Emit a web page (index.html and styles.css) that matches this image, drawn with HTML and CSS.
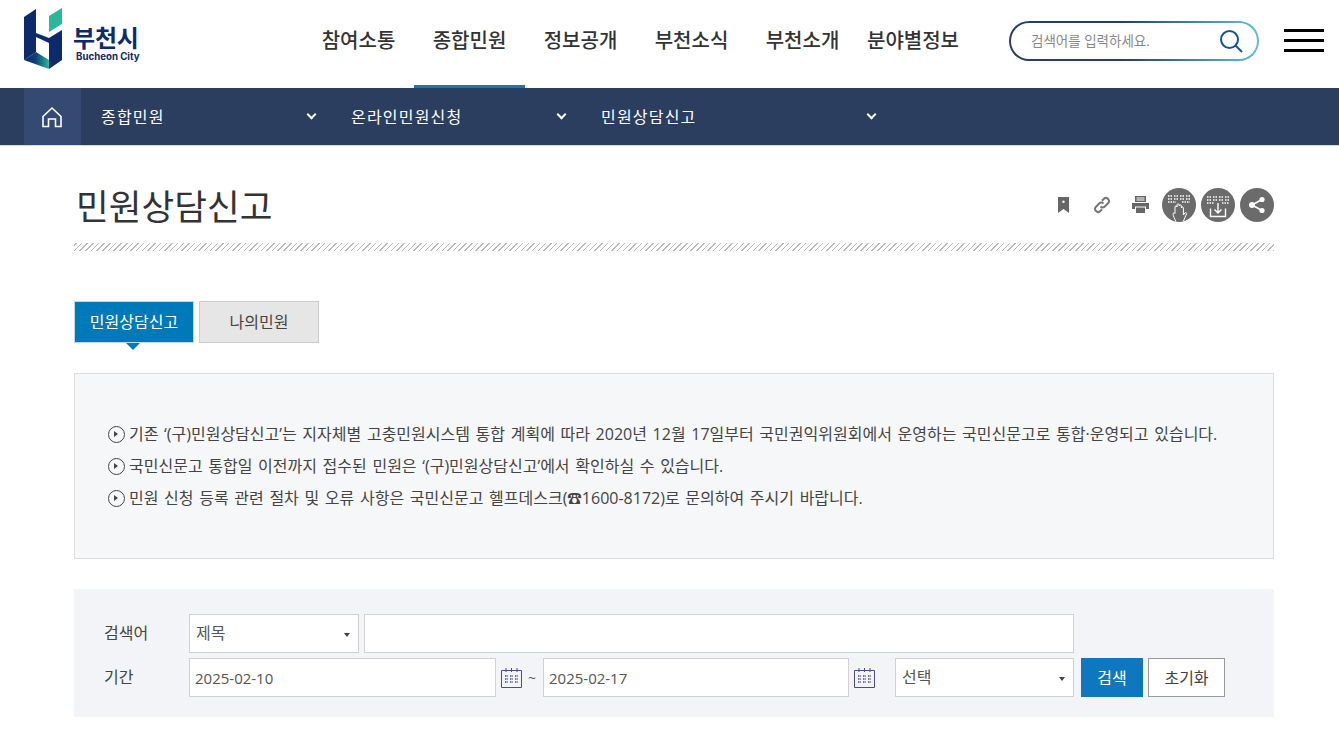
FILE: index.html
```html
<!DOCTYPE html>
<html lang="ko">

<head>
    <meta charset="UTF-8">
    <meta name="viewport" content="width=device-width, initial-scale=1.0">
    <title>민원상담신고 | 부천시</title>
    <link rel="stylesheet" href="styles.css">
</head>

<body>
    <header class="header">
        <a class="logo" href="#">
            <svg class="logo-mark" viewBox="24 8 39 61" width="39" height="61">
                <defs>
                    <linearGradient id="logoFade" x1="0" y1="0" x2="1" y2="0">
                        <stop offset="0" stop-color="#0d2a6b"></stop>
                        <stop offset="0.45" stop-color="#0d3f73"></stop>
                        <stop offset="1" stop-color="#2bb59b"></stop>
                    </linearGradient>
                </defs>
                <polygon points="49,16 62,8 62,24 49,32" fill="#2bb79c"></polygon>
                <polygon points="24,17 36,9 36,52 24,60" fill="#0d2a6b"></polygon>
                <polygon points="36,37 49,43 49,61 62,60 62,30 49,38 36,33" fill="#0d2a6b"></polygon>
                <polygon points="24,60 36,52 49,60 49,69" fill="url(#logoFade)"></polygon>
                <polygon points="49,60 62,52 62,60 49,69" fill="#0d2a6b"></polygon>
                <polygon points="37,39 49,44 49,59 37,51" fill="#fff"></polygon>
            </svg>
            <span class="logo-text">
                <strong>부천시</strong>
                <em>Bucheon City</em>
            </span>
        </a>

        <nav class="gnb">
            <a href="#">참여소통</a>
            <a href="#" class="on">종합민원</a>
            <a href="#">정보공개</a>
            <a href="#">부천소식</a>
            <a href="#">부천소개</a>
            <a href="#" class="last">분야별정보</a>
        </nav>

        <form class="top-search">
            <input type="text" placeholder="검색어를 입력하세요.">
            <svg viewBox="0 0 24 24" width="24" height="24" fill="none" stroke="#12568f" stroke-width="2">
                <circle cx="10.5" cy="10.5" r="8.5"></circle>
                <line x1="16.5" y1="16.5" x2="23" y2="23"></line>
            </svg>
        </form>

        <button class="menu-btn" type="button"><span></span><span></span><span></span></button>
    </header>

    <div class="sub-nav">
        <a class="home" href="#">
            <svg viewBox="0 0 22 22" width="22" height="22" fill="none" stroke="#fff" stroke-width="1.6">
                <path d="M2 10.5 11 2l9 8.5V20.500h-5.500v-7.500h-7v7.500H2z"></path>
            </svg>
        </a>
        <a class="crumb" href="#">종합민원<i></i></a>
        <a class="crumb" href="#">온라인민원신청<i></i></a>
        <a class="crumb wide" href="#">민원상담신고<i></i></a>
    </div>

    <main class="container">
        <div class="title-row">
            <h1>민원상담신고</h1>
            <div class="tools">
                <svg class="tool mark" viewBox="0 0 11 16" width="11" height="16" fill="#666">
                    <path fill-rule="evenodd" d="M0 0h11v16l-5.500-4L0 16zM5.500 3.500a1.200 1.200 0 1 0 0 2.400 1.200 1.200 0 0 0 0-2.400z"></path>
                </svg>
                <svg class="tool link" viewBox="0 0 18 18" width="18" height="18" fill="none" stroke="#777" stroke-width="2">
                    <path d="M7.500 10.500a3 3 0 0 0 4.300 0l3.200-3.200a3 3 0 0 0-4.300-4.300L9 4.700"></path>
                    <path d="M10.500 7.500a3 3 0 0 0-4.300 0L3 10.700A3 3 0 0 0 7.300 15L9 13.300"></path>
                </svg>
                <svg class="tool print" viewBox="0 0 17 17" width="17" height="17" fill="#666">
                    <path fill-rule="evenodd" d="M3 0h11v6H3zM4.500 1.500v1h8v-1zM4.500 3.500v1h8v-1z"></path>
                    <path d="M0 7h17v6h-3v-2.500H3V13H0z"></path>
                    <path d="M4 11.500h9V17H4z"></path>
                </svg>
                <span class="round">
                    <svg viewBox="0 0 34 34" width="34" height="34" fill="none">
                        <g stroke="#fff" stroke-width="1.500">
                            <path d="M6 8h23M6 11h23" stroke-dasharray="1.500 1 1.500 2"></path>
                            <path d="M6 14h8M20 14h8" stroke-dasharray="1.500 1"></path>
                        </g>
                        <path d="M14 34c-1-3-3-6-3-8 0-1 1-1.500 2-.5V19c0-1.500 2-1.500 2 0v-2c0-1.500 2.200-1.500 2.200 0v1c0-1.500 2.200-1.500 2.200 0v2c0-1.500 2-1.500 2 0v7l1.500-2c1-1 2.100 0 1.600 1l-3.500 8" stroke="#fff" stroke-width="1"></path>
                    </svg>
                </span>
                <span class="round">
                    <svg viewBox="0 0 34 34" width="34" height="34" fill="none" stroke="#fff">
                        <g stroke-width="1.500">
                            <path d="M6 9h22M6 12h22" stroke-dasharray="1.500 1 1.500 2"></path>
                            <path d="M6 15h7M21 15h7" stroke-dasharray="1.500 1"></path>
                        </g>
                        <path d="M9.500 20.500v8h15v-8" stroke-width="1.400"></path>
                        <path d="M17 15v10M13.500 21.500l3.500 3.500 3.500-3.500" stroke-width="1.400"></path>
                    </svg>
                </span>
                <span class="round">
                    <svg viewBox="0 0 34 34" width="34" height="34" fill="#fff" stroke="#fff">
                        <line x1="12" y1="17" x2="22" y2="11.500" stroke-width="1.500"></line>
                        <line x1="12" y1="17" x2="22" y2="22.500" stroke-width="1.500"></line>
                        <circle cx="12" cy="17" r="3" stroke="none"></circle>
                        <circle cx="22" cy="11.500" r="2.600" stroke="none"></circle>
                        <circle cx="22" cy="22.500" r="2.600" stroke="none"></circle>
                    </svg>
                </span>
            </div>
        </div>
        <div class="hatch"></div>

        <ul class="tabs">
            <li class="on"><a href="#">민원상담신고</a></li>
            <li><a href="#">나의민원</a></li>
        </ul>

        <div class="notice">
            <p>기존 ‘(구)민원상담신고’는 지자체별 고충민원시스템 통합 계획에 따라 2020년 12월 17일부터 국민권익위원회에서 운영하는 국민신문고로 통합·운영되고 있습니다.</p>
            <p>국민신문고 통합일 이전까지 접수된 민원은 ‘(구)민원상담신고’에서 확인하실 수 있습니다.</p>
            <p>민원 신청 등록 관련 절차 및 오류 사항은 국민신문고 헬프데스크(<span class="tel">☎</span>1600-8172)로 문의하여 주시기 바랍니다.</p>
        </div>

        <form class="search-box">
            <div class="row">
                <label>검색어</label>
                <div class="select w170">제목</div>
                <input class="field w710" type="text">
            </div>
            <div class="row">
                <label>기간</label>
                <input class="field date w307" type="text" value="2025-02-10">
                <svg class="cal" viewBox="0 0 21 21" width="21" height="21" fill="none" stroke="#4a4a8c">
                    <path d="M.5 3.500h20v17H.5zM5 1v4M10.500 1v4M16 1v4"></path>
                    <path d="M4 9h3M9 9h3M14 9h3M4 12h3M9 12h3M14 12h3M4 15h3M9 15h3M14 15h3" stroke-width="1.500" stroke-dasharray="1.500 .8"></path>
                </svg>
                <span class="tilde">~</span>
                <input class="field date w306" type="text" value="2025-02-17">
                <svg class="cal" viewBox="0 0 21 21" width="21" height="21" fill="none" stroke="#4a4a8c">
                    <path d="M.5 3.500h20v17H.5zM5 1v4M10.500 1v4M16 1v4"></path>
                    <path d="M4 9h3M9 9h3M14 9h3M4 12h3M9 12h3M14 12h3M4 15h3M9 15h3M14 15h3" stroke-width="1.500" stroke-dasharray="1.500 .8"></path>
                </svg>
                <div class="select w179">선택</div>
                <button class="btn-search" type="button">검색</button>
                <button class="btn-reset" type="button">초기화</button>
            </div>
        </form>
    </main>
</body>

</html>
```

FILE: styles.css
```css
* {
    box-sizing: border-box;
}

html,
body {
    margin: 0;
    padding: 0;
}

body {
    font-family: "Open Sans", "Noto Sans CJK KR", sans-serif;
    color: #444;
    background: #fff;
}

a {
    color: inherit;
    text-decoration: none;
}

/* header */
.header {
    display: flex;
    align-items: stretch;
    height: 88px;
    padding-left: 24px;
}

.logo {
    display: flex;
    width: 279px;
    padding-top: 8px;
}

.logo-mark {
    flex: none;
}

.logo-text {
    display: flex;
    flex-direction: column;
    margin-left: 10px;
    color: #0d2a6b;
}

.logo-text strong {
    font-size: 24px;
    line-height: 28px;
    margin-top: 16px;
    letter-spacing: -0.2px;
}

.logo-text em {
    font-family: Inter, sans-serif;
    font-style: normal;
    font-weight: 700;
    font-size: 9.7px;
    line-height: 9px;
    margin: 0 0 0 3px;
}

.gnb {
    display: flex;
    width: 677px;
}

.gnb a {
    width: 111px;
    line-height: 82px;
    text-align: center;
    font-size: 20px;
    font-weight: 500;
    color: #333;
    white-space: nowrap;
    border-bottom: 3px solid transparent;
}

.gnb a.on {
    border-bottom-color: #1a76b5;
}

.gnb a.last {
    width: 120px;
    margin-left: -5px;
}

.top-search {
    display: flex;
    align-items: center;
    width: 250px;
    height: 40px;
    margin: 21px 25px 0 29px;
    padding: 0 14px 0 18px;
    border: 2px solid transparent;
    border-radius: 20px;
    background: linear-gradient(#fff, #fff) padding-box,
        linear-gradient(90deg, #2c3e5f 0%, #2c3e5f 45%, #64bdd8 100%) border-box;
}

.top-search input {
    flex: 1;
    min-width: 0;
    padding-left: 2px;
    border: 0;
    outline: 0;
    background: none;
    font-family: inherit;
    font-size: 13.5px;
}

.top-search input::placeholder {
    color: #888;
}

.menu-btn {
    display: flex;
    flex-direction: column;
    gap: 7px;
    width: 40px;
    height: 23px;
    margin-top: 29px;
    padding: 0;
    border: 0;
    background: none;
}

.menu-btn span {
    display: block;
    width: 40px;
    height: 3px;
    background: #000;
}

/* location bar */
.sub-nav {
    display: flex;
    height: 58px;
    padding-left: 24px;
    background: #2c3e5f;
    border-bottom: 1px solid #d5d8de;
}

.home {
    display: flex;
    align-items: center;
    justify-content: center;
    width: 57px;
    padding-right: 2px;
    background: #344a72;
}

.crumb {
    position: relative;
    display: block;
    width: 250px;
    padding-left: 20px;
    line-height: 58px;
    font-size: 16px;
    letter-spacing: 1.2px;
    color: #fff;
}

.crumb.wide {
    width: 310px;
}

.crumb i {
    position: absolute;
    top: 23px;
    right: 16px;
    width: 7px;
    height: 7px;
    border-right: 2px solid #fff;
    border-bottom: 2px solid #fff;
    transform: rotate(45deg);
}

/* content */
.container {
    width: 1200px;
    margin-left: 74px;
}

.title-row {
    display: flex;
    align-items: center;
    justify-content: space-between;
    height: 97px;
}

h1 {
    margin: 20px 0 0 2px;
    font-size: 35.6px;
    font-weight: 400;
    color: #333;
}

.tools {
    display: flex;
    align-items: center;
    margin-top: 20px;
}

.tool {
    margin-right: 22px;
}

.tool.mark {
    margin-right: 24px;
}

.tool.link {
    margin-right: 21px;
}

.tool.print {
    margin-right: 13px;
}

.round {
    display: flex;
    width: 34px;
    height: 34px;
    margin-left: 5px;
    border-radius: 50%;
    background: #6b6b6b;
    overflow: hidden;
}

.round:first-of-type {
    margin-left: 0;
}

.hatch {
    height: 8px;
    background: repeating-linear-gradient(-45deg, #bbb 0, #bbb 1px, #fff 1px, #fff 4px);
}

.tabs {
    display: flex;
    gap: 5px;
    margin: 50px 0 30px;
    padding: 0;
    list-style: none;
}

.tabs li {
    position: relative;
    width: 120px;
    height: 42px;
    background: #e6e6e6;
    border: 1px solid #ccc;
    text-align: center;
    font-size: 16px;
    line-height: 40px;
    color: #444;
}

.tabs li.on {
    background: #0079b9;
    border-color: #bcd9e9;
    color: #fff;
}

.tabs li.on::after {
    content: "";
    position: absolute;
    left: 51px;
    top: 41px;
    border: 7px solid transparent;
    border-top-color: #0079b9;
    border-bottom: 0;
}

.notice {
    height: 186px;
    padding: 44px 32px 0;
    background: #f6f7f9;
    border: 1px solid #ddd;
}

.notice p {
    position: relative;
    margin: 0;
    padding-left: 22px;
    font-size: 16px;
    line-height: 32px;
    word-spacing: 1.5px;
    color: #444;
    white-space: nowrap;
}

.notice p::before {
    content: "";
    position: absolute;
    left: 1px;
    top: 8px;
    width: 15px;
    height: 15px;
    border: 1.500px solid #444;
    border-radius: 50%;
}

.notice p::after {
    content: "";
    position: absolute;
    left: 7px;
    top: 12.500px;
    border-left: 4px solid #444;
    border-top: 3px solid transparent;
    border-bottom: 3px solid transparent;
}

.tel {
    font-size: 14.5px;
}

.search-box {
    display: flex;
    flex-direction: column;
    gap: 5px;
    height: 128px;
    margin-top: 30px;
    padding: 25px 30px 0;
    background: #f2f4f8;
}

.row {
    display: flex;
    align-items: center;
    height: 39px;
}

.row label {
    width: 85px;
    font-size: 16px;
    margin-top: -3px;
    color: #444;
}

.field,
.select {
    height: 39px;
    padding: 0 6px;
    background: #fff;
    border: 1px solid #d2d2d2;
    font-family: inherit;
    font-size: 16px;
    line-height: 37px;
    color: #555;
}

.field.date {
    padding: 0 5px;
    font-size: 15px;
}

.select {
    position: relative;
}

.select::after {
    content: "";
    position: absolute;
    right: 8px;
    top: 18px;
    border-top: 4px solid #444;
    border-left: 3.500px solid transparent;
    border-right: 3.500px solid transparent;
}

.w170 {
    width: 170px;
    margin-right: 5px;
}

.w710 {
    width: 710px;
}

.w307 {
    width: 307px;
}

.w306 {
    width: 306px;
}

.w179 {
    width: 179px;
    margin-left: 20px;
}

.cal {
    flex: none;
    margin-left: 5px;
}

.tilde {
    width: 21px;
    padding-left: 6px;
    font-size: 14px;
    color: #555;
}

.btn-search,
.btn-reset {
    height: 39px;
    font-family: inherit;
    font-size: 16px;
    padding: 0 0 2px;
}

.btn-search {
    width: 62px;
    margin-left: 7px;
    border: 0;
    background: #0f77bd;
    color: #fff;
}

.btn-reset {
    width: 77px;
    margin-left: 5px;
    border: 1px solid #999;
    background: #fff;
    color: #444;
}
```
